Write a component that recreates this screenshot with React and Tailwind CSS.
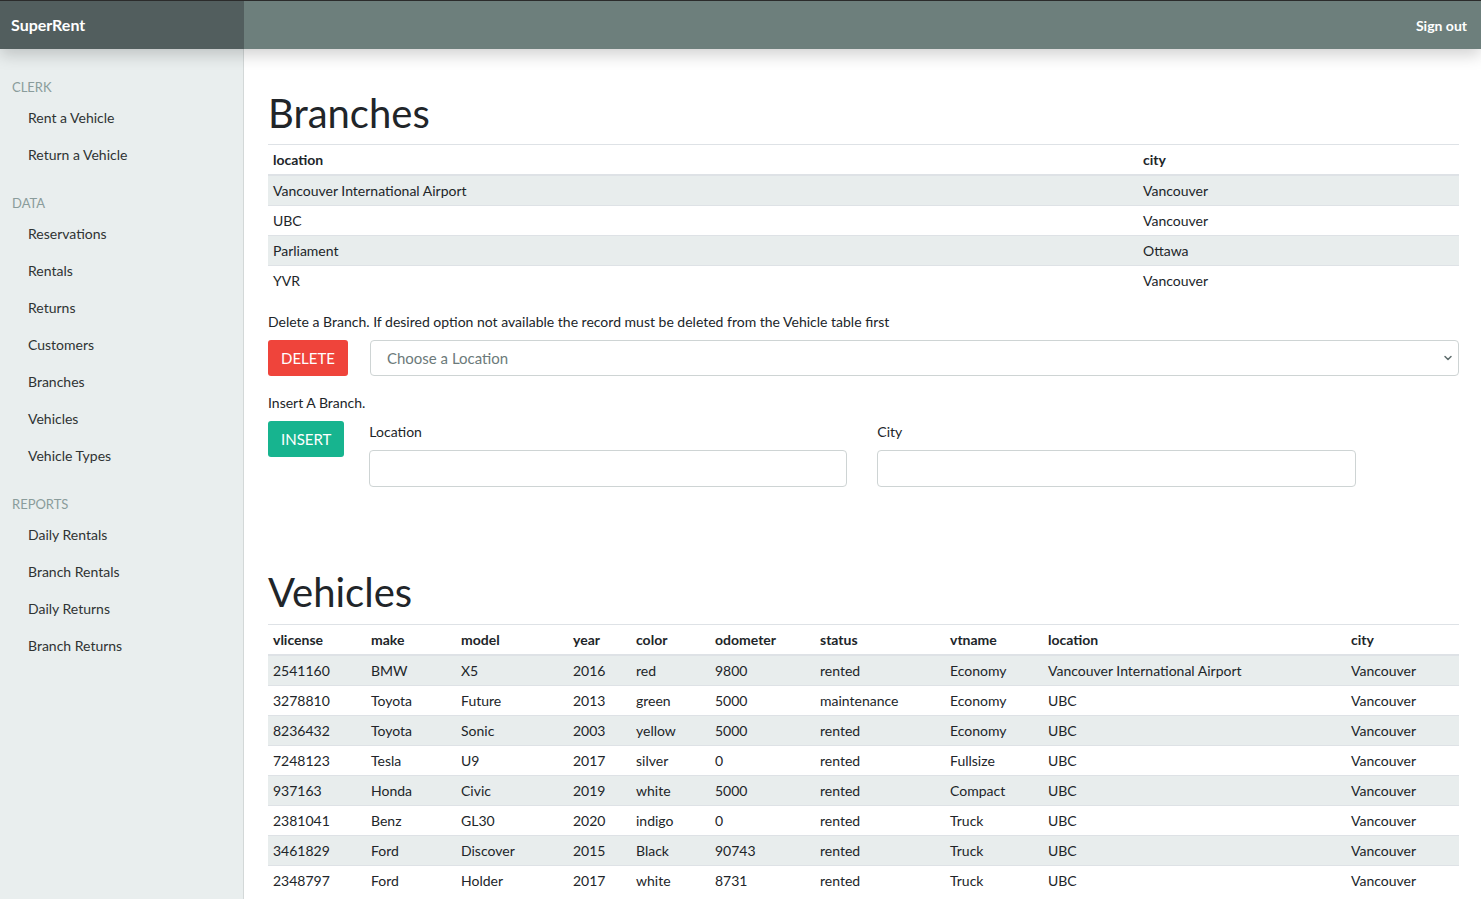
import { ChevronDown } from 'lucide-react';

const nav = [
  { title: 'CLERK', items: ['Rent a Vehicle', 'Return a Vehicle'] },
  {
    title: 'DATA',
    items: ['Reservations', 'Rentals', 'Returns', 'Customers', 'Branches', 'Vehicles', 'Vehicle Types'],
  },
  { title: 'REPORTS', items: ['Daily Rentals', 'Branch Rentals', 'Daily Returns', 'Branch Returns'] },
];

const branches = [
  ['Vancouver International Airport', 'Vancouver'],
  ['UBC', 'Vancouver'],
  ['Parliament', 'Ottawa'],
  ['YVR', 'Vancouver'],
];

const vehicleCols = [
  ['vlicense', 'w-[98px]'],
  ['make', 'w-[90px]'],
  ['model', 'w-[112px]'],
  ['year', 'w-[63px]'],
  ['color', 'w-[79px]'],
  ['odometer', 'w-[105px]'],
  ['status', 'w-[130px]'],
  ['vtname', 'w-[98px]'],
  ['location', 'w-[303px]'],
  ['city', ''],
];

const vehicles = [
  ['2541160', 'BMW', 'X5', '2016', 'red', '9800', 'rented', 'Economy', 'Vancouver International Airport', 'Vancouver'],
  ['3278810', 'Toyota', 'Future', '2013', 'green', '5000', 'maintenance', 'Economy', 'UBC', 'Vancouver'],
  ['8236432', 'Toyota', 'Sonic', '2003', 'yellow', '5000', 'rented', 'Economy', 'UBC', 'Vancouver'],
  ['7248123', 'Tesla', 'U9', '2017', 'silver', '0', 'rented', 'Fullsize', 'UBC', 'Vancouver'],
  ['937163', 'Honda', 'Civic', '2019', 'white', '5000', 'rented', 'Compact', 'UBC', 'Vancouver'],
  ['2381041', 'Benz', 'GL30', '2020', 'indigo', '0', 'rented', 'Truck', 'UBC', 'Vancouver'],
  ['3461829', 'Ford', 'Discover', '2015', 'Black', '90743', 'rented', 'Truck', 'UBC', 'Vancouver'],
  ['2348797', 'Ford', 'Holder', '2017', 'white', '8731', 'rented', 'Truck', 'UBC', 'Vancouver'],
];

function DataTable({ cols, rows }) {
  return (
    <table className="w-full table-fixed text-[14px] text-[#212529] mb-4">
      <thead>
        <tr>
          {cols.map(([name, w]) => (
            <th
              key={name}
              className={`${w} text-left font-bold px-[5px] py-[4px] leading-[21px] border-t border-[#dee2e6] border-b-2`}
            >
              {name}
            </th>
          ))}
        </tr>
      </thead>
      <tbody>
        {rows.map((row, i) => (
          <tr key={i} className={i % 2 === 0 ? 'bg-[#e8eded]' : ''}>
            {row.map((cell, j) => (
              <td key={j} className="px-[5px] py-[4px] leading-[21px] border-t border-[#dee2e6] whitespace-nowrap">
                {cell}
              </td>
            ))}
          </tr>
        ))}
      </tbody>
    </table>
  );
}

export default function App() {
  return (
    <div className="min-h-screen flex flex-col font-['Lato','Liberation_Sans',sans-serif] text-[#212529]">
      {/* Top bar */}
      <header className="relative z-10 flex h-[49px] border-t border-[#2b2b2b] bg-[#6d7f7c] shadow-[0_6px_16px_rgba(0,0,0,0.18)]">
        <div className="w-[244px] bg-[#525e5e] flex items-center px-[11px] text-white text-[16px] font-bold">
          SuperRent
        </div>
        <div className="flex-1 flex items-center justify-end pr-[14px] text-white text-[14px] font-bold">
          Sign out
        </div>
      </header>

      <div className="flex flex-1">
        {/* Sidebar */}
        <aside className="w-[244px] shrink-0 bg-[#e9eeee] border-r border-[#d3d8d8] pt-[29px]">
          {nav.map((section) => (
            <div key={section.title} className="mb-[21px]">
              <div className="px-[12px] text-[13px] leading-[18px] text-[#8a9c9b] mb-[3px]">{section.title}</div>
              {section.items.map((item) => (
                <div key={item} className="h-[37px] flex items-center pl-[28px] text-[14px] text-[#2f3333]">
                  {item}
                </div>
              ))}
            </div>
          ))}
        </aside>

        {/* Main */}
        <main className="flex-1 pt-[40px] pl-[24px] pr-[22px]">
          <h1 className="text-[40px] leading-[48px] mb-[7px] font-normal">Branches</h1>
          <DataTable
            cols={[
              ['location', 'w-[870px]'],
              ['city', ''],
            ]}
            rows={branches}
          />

          <p className="text-[14px] leading-[21px]">
            Delete a Branch. If desired option not available the record must be deleted from the Vehicle table first
          </p>
          <div className="flex gap-[22px] mt-[8px]">
            <button className="h-[36px] px-[13px] rounded-[3px] bg-[#ef443b] text-white text-[15px]">DELETE</button>
            <div className="flex-1 h-[36px] border border-[#ced4d4] rounded-[4px] flex items-center justify-between pl-[16px] pr-[4px]">
              <span className="text-[15px] text-[#6c7a7a]">Choose a Location</span>
              <ChevronDown className="w-[12px] h-[12px] text-[#5f6d6d]" strokeWidth={3} />
            </div>
          </div>

          <p className="text-[14px] leading-[21px] mt-[16px]">Insert A Branch.</p>
          <div className="flex gap-[25px] mt-[8px]">
            <button className="h-[36px] px-[13px] rounded-[3px] bg-[#17b48f] text-white text-[15px]">INSERT</button>
            <div className="flex gap-[30px]">
              <div className="w-[478px]">
                <div className="text-[14px] leading-[21px] mb-[8px]">Location</div>
                <div className="h-[37px] border border-[#ced4d4] rounded-[4px]" />
              </div>
              <div className="w-[479px]">
                <div className="text-[14px] leading-[21px] mb-[8px]">City</div>
                <div className="h-[37px] border border-[#ced4d4] rounded-[4px]" />
              </div>
            </div>
          </div>

          <h1 className="text-[40px] leading-[48px] mb-[8px] mt-[81px] font-normal">Vehicles</h1>
          <DataTable cols={vehicleCols} rows={vehicles} />
        </main>
      </div>
    </div>
  );
}
